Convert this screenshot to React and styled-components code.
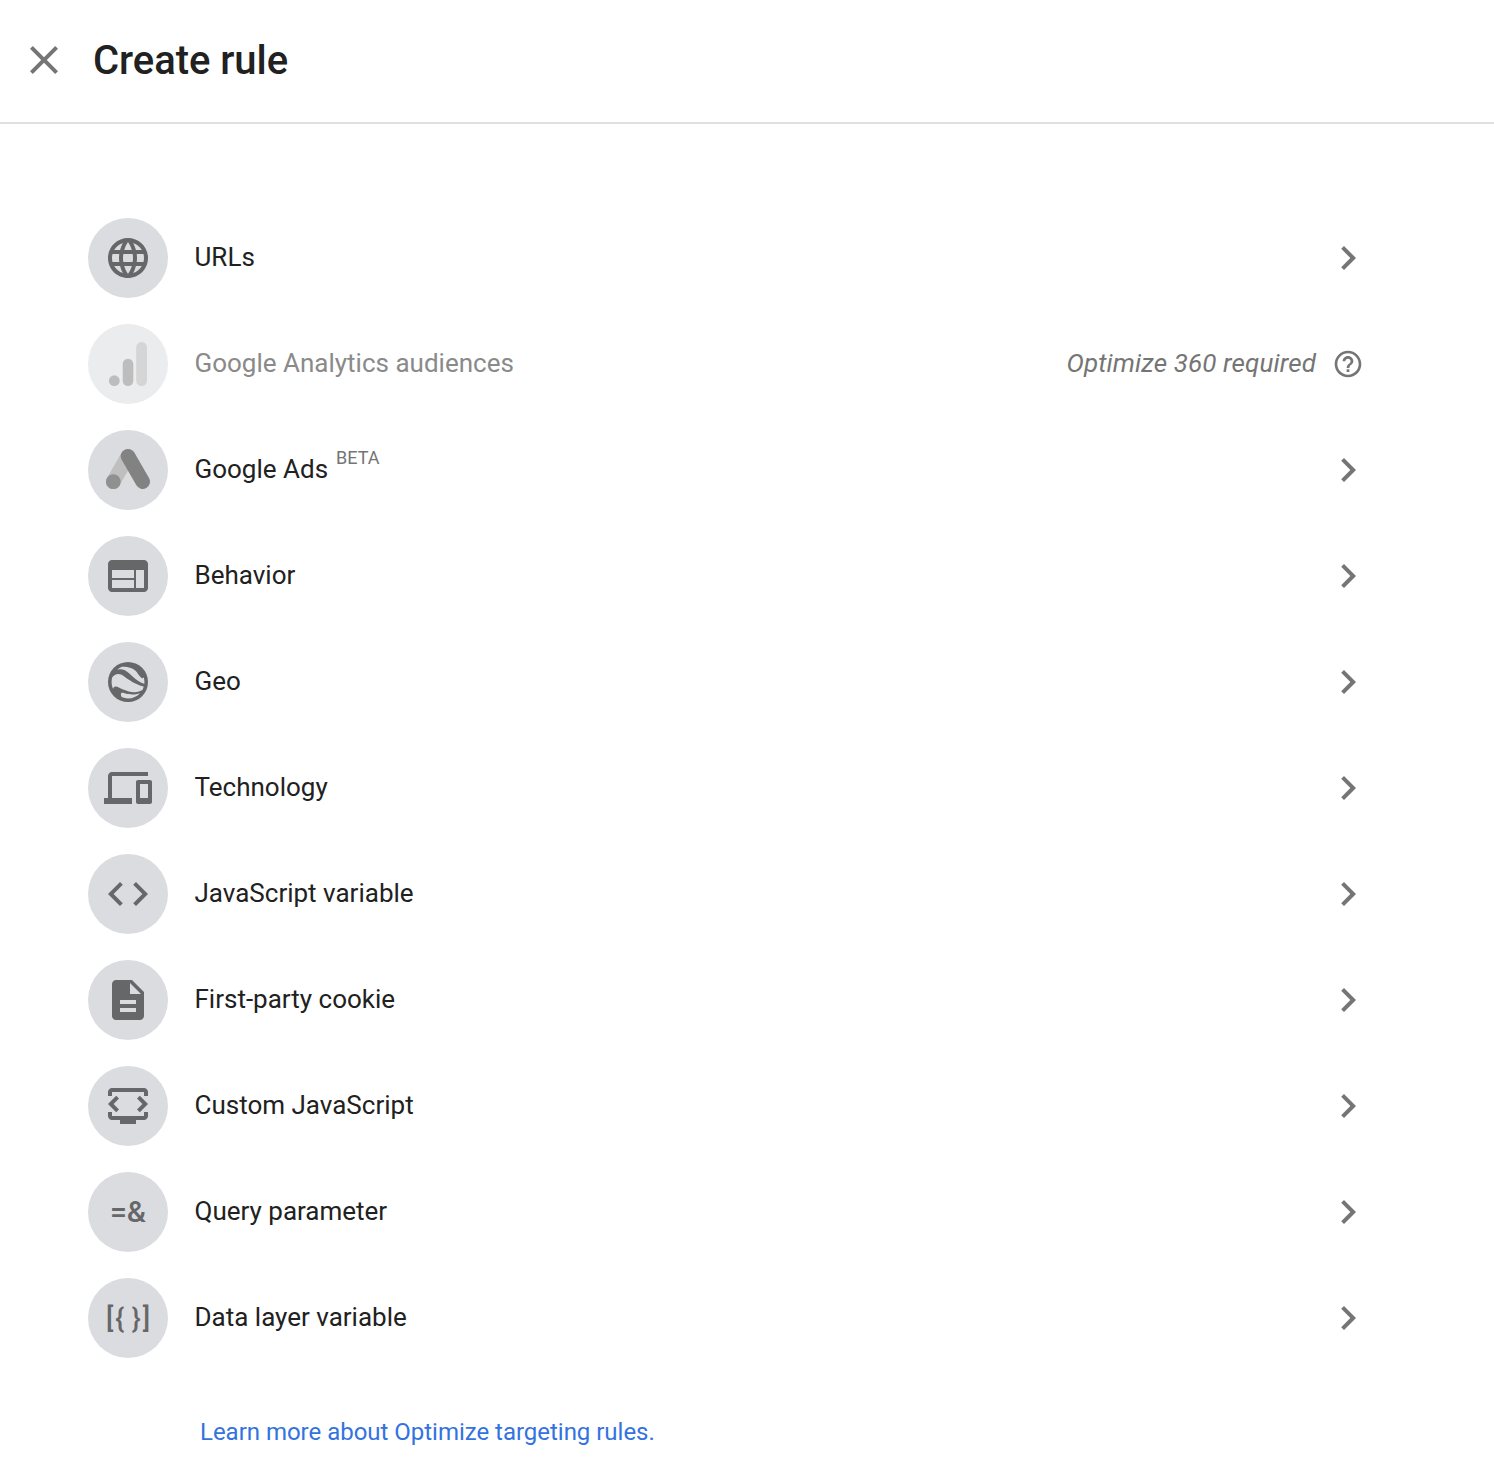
import React from "react";
import styled, { createGlobalStyle } from "styled-components";

const GlobalStyle = createGlobalStyle`
  * { box-sizing: border-box; }
  body {
    margin: 0;
    background: #fff;
    color: #212121;
    font-family: Roboto, "Liberation Sans", sans-serif;
  }
`;

const Page = styled.main`
  min-height: 1482px;
`;

const Header = styled.header`
  display: flex;
  align-items: center;
  height: 124px;
  padding: 0 20px 2px;
  border-bottom: 2px solid #e0e0e0;
`;

const IconButton = styled.button`
  display: flex;
  padding: 0;
  border: 0;
  background: none;
  color: #757575;
`;

const Title = styled.h1`
  margin: 0 0 0 25px;
  padding-top: 2px;
  font-size: 40px;
  font-weight: 500;
  line-height: 48px;
  letter-spacing: -0.05px;
`;

const RuleList = styled.ul`
  display: flex;
  flex-direction: column;
  gap: 26px;
  margin: 0;
  padding: 94px 122px 0 88px;
  list-style: none;
`;

const RuleRow = styled.li`
  display: flex;
  align-items: center;
  height: 80px;
  color: ${(p) => (p.$disabled ? "#8a8a8a" : "#212121")};
`;

const Badge = styled.span`
  display: flex;
  flex: none;
  align-items: center;
  justify-content: center;
  width: 80px;
  height: 80px;
  border-radius: 50%;
  background: ${(p) => (p.$disabled ? "#ebeced" : "#dbdce0")};
  color: #666769;
`;

const Glyph = styled.span`
  padding-top: ${(p) => p.$drop || 0}px;
  font-size: ${(p) => p.$size}px;
  font-weight: 500;
  line-height: 32px;
  letter-spacing: ${(p) => p.$spacing || 0}px;
  word-spacing: ${(p) => p.$wordSpacing || 0}px;
  margin-right: -${(p) => p.$spacing || 0}px;
  white-space: pre;
`;

const Label = styled.span`
  margin-left: 26.5px;
  padding-bottom: 2px;
  font-size: 26px;
  line-height: 32px;
`;

const Beta = styled.span`
  margin: 0 0 24px 8px;
  color: #757575;
  font-size: 18px;
  line-height: 20px;
`;

const Trailing = styled.span`
  display: flex;
  align-items: center;
  margin-left: auto;
  color: #757575;
`;

const Requirement = styled.em`
  margin-right: 16px;
  padding-bottom: 2px;
  font-size: 26px;
  line-height: 32px;
  letter-spacing: 0.12px;
`;

const HelpSlot = styled.span`
  display: flex;
  margin-right: 8px;
`;

const LearnMore = styled.a`
  display: inline-block;
  margin: 58px 0 0 200px;
  color: #3372df;
  font-size: 24px;
  line-height: 32px;
  letter-spacing: -0.02px;
  text-decoration: none;
`;

const Svg = styled.svg.attrs(() => ({ viewBox: "0 0 24 24", "aria-hidden": true }))`
  display: block;
  width: ${(p) => p.$size || 48}px;
  height: ${(p) => p.$size || 48}px;
  fill: currentColor;
`;

const Icon = ({ d, size }) => (
  <Svg $size={size}>
    <path d={d} />
  </Svg>
);

const paths = {
  close: "M19 6.41L17.59 5 12 10.59 6.41 5 5 6.41 10.59 12 5 17.59 6.41 19 12 13.41 17.59 19 19 17.59 13.41 12z",
  chevron: "M10 6L8.59 7.41 13.17 12l-4.58 4.59L10 18l6-6z",
  help: "M11 18h2v-2h-2v2zm1-16C6.48 2 2 6.48 2 12s4.48 10 10 10 10-4.48 10-10S17.52 2 12 2zm0 18c-4.41 0-8-3.59-8-8s3.59-8 8-8 8 3.59 8 8-3.59 8-8 8zm0-14c-2.21 0-4 1.79-4 4h2c0-1.1.9-2 2-2s2 .9 2 2c0 2-3 1.75-3 5h2c0-2.25 3-2.5 3-5 0-2.21-1.79-4-4-4z",
  globe: "M11.99 2C6.47 2 2 6.48 2 12s4.47 10 9.99 10C17.52 22 22 17.52 22 12S17.52 2 11.99 2zm6.93 6h-2.95c-.32-1.25-.78-2.45-1.38-3.56 1.84.63 3.37 1.91 4.33 3.56zM12 4.04c.83 1.2 1.48 2.53 1.91 3.96h-3.82c.43-1.43 1.08-2.76 1.91-3.96zM4.26 14C4.1 13.36 4 12.69 4 12s.1-1.36.26-2h3.38c-.08.66-.14 1.32-.14 2 0 .68.06 1.34.14 2H4.26zm.82 2h2.95c.32 1.25.78 2.45 1.38 3.56-1.84-.63-3.37-1.9-4.33-3.56zm2.95-8H5.08c.96-1.66 2.49-2.93 4.33-3.56C8.81 5.55 8.35 6.75 8.03 8zM12 19.96c-.83-1.2-1.48-2.53-1.91-3.96h3.82c-.43 1.43-1.08 2.76-1.91 3.96zM14.34 14H9.66c-.09-.66-.16-1.32-.16-2 0-.68.07-1.35.16-2h4.68c.09.65.16 1.32.16 2 0 .68-.07 1.34-.16 2zm.25 5.56c.6-1.11 1.06-2.31 1.38-3.56h2.95c-.96 1.65-2.49 2.93-4.33 3.56zM16.36 14c.08-.66.14-1.32.14-2 0-.68-.06-1.34-.14-2h3.38c.16.64.26 1.31.26 2s-.1 1.36-.26 2h-3.38z",
  web: "M20 4H4c-1.1 0-1.99.9-1.99 2L2 18c0 1.1.9 2 2 2h16c1.1 0 2-.9 2-2V6c0-1.1-.9-2-2-2zm-5 14H4v-4h11v4zm0-5H4V9h11v4zm5 5h-4V9h4v9z",
  earth: "M12.4,7.56C9.6,4.91 7.3,5.65 6.31,6.1C7.06,5.38 7.94,4.8 8.92,4.4C11.7,4.3 14.83,4.84 16.56,7.31C16.56,7.31 19,11.5 19.86,9.65C20.08,10.4 20.2,11.18 20.2,12C20.2,12.3 20.18,12.59 20.15,12.88C18.12,12.65 15.33,10.32 12.4,7.56M19.1,16.1C18.16,16.47 17,17.1 15.14,17.1C13.26,17.1 11.61,16.35 9.56,15.7C7.7,15.11 7,14.2 5.72,14.2C5.06,14.2 4.73,14.86 4.55,15.41C4.07,14.37 3.8,13.22 3.8,12C3.8,11.19 3.92,10.42 4.14,9.68C5.4,8.1 7.33,7.12 10.09,9.26C10.09,9.26 16.32,13.92 19.88,14.23C19.7,14.89 19.43,15.5 19.1,16.1M12,20.2C10.88,20.2 9.81,19.97 8.83,19.56C8.21,18.08 8.22,16.92 9.95,17.5C9.95,17.5 13.87,19 18,17.58C16.5,19.19 14.37,20.2 12,20.2M12,2A10,10 0 0,0 2,12A10,10 0 0,0 12,22A10,10 0 0,0 22,12A10,10 0 0,0 12,2Z",
  devices: "M4 6h18V4H4c-1.1 0-2 .9-2 2v11H0v3h14v-3H4V6zm19 2h-6c-.55 0-1 .45-1 1v10c0 .55.45 1 1 1h6c.55 0 1-.45 1-1V9c0-.55-.45-1-1-1zm-1 9h-4v-7h4v7z",
  code: "M9.4 16.6L4.8 12l4.6-4.6L8 6l-6 6 6 6 1.4-1.4zm5.2 0l4.6-4.6-4.6-4.6L16 6l6 6-6 6-1.4-1.4z",
  document: "M14 2H6c-1.1 0-1.99.9-1.99 2L4 20c0 1.1.89 2 1.99 2H18c1.1 0 2-.9 2-2V8l-6-6zm2 16H8v-2h8v2zm0-4H8v-2h8v2zm-3-5V3.5L18.5 9H13z",
  monitor: "M2 7V5c0-1.1.9-2 2-2h16c1.1 0 2 .9 2 2v2h-2V5H4v2zM2 15h2v2h16v-2h2v2c0 1.1-.9 2-2 2h-4v2H8v-2H4c-1.1 0-2-.9-2-2zM2 11l4.1-4.1 1.4 1.4L4.8 11l2.7 2.7-1.4 1.4zM22 11l-4.1-4.1-1.4 1.4 2.7 2.7-2.7 2.7 1.4 1.4z",
};

const AnalyticsIcon = () => (
  <Svg>
    <circle cx="5.15" cy="20.35" r="2.7" fill="#bdbdbd" />
    <rect x="9.35" y="9.35" width="5.3" height="13.7" rx="2.65" fill="#bdbdbd" />
    <rect x="16.1" y="1" width="5.4" height="22.05" rx="2.7" fill="#d5d5d5" />
  </Svg>
);

const AdsIcon = () => (
  <Svg strokeWidth="7.3" strokeLinecap="round">
    <path d="M4.65 17.8L12 5.1" stroke="#bfbfc0" />
    <path d="M12 5.1L19.35 17.8" stroke="#828282" />
    <circle cx="4.65" cy="17.85" r="3.7" fill="#909090" />
  </Svg>
);

const rules = [
  { label: "URLs", icon: <Icon d={paths.globe} /> },
  { label: "Google Analytics audiences", icon: <AnalyticsIcon />, requires: "Optimize 360 required" },
  { label: "Google Ads", icon: <AdsIcon />, beta: true },
  { label: "Behavior", icon: <Icon d={paths.web} /> },
  { label: "Geo", icon: <Icon d={paths.earth} /> },
  { label: "Technology", icon: <Icon d={paths.devices} /> },
  { label: "JavaScript variable", icon: <Icon d={paths.code} /> },
  { label: "First-party cookie", icon: <Icon d={paths.document} /> },
  { label: "Custom JavaScript", icon: <Icon d={paths.monitor} /> },
  { label: "Query parameter", icon: <Glyph $size={30}>=&amp;</Glyph> },
  {
    label: "Data layer variable",
    icon: <Glyph $size={27} $spacing={2} $wordSpacing={-3.2} $drop={2}>{"[{ }]"}</Glyph>,
  },
];

const Rule = ({ label, icon, beta, requires }) => (
  <RuleRow $disabled={!!requires}>
    <Badge $disabled={!!requires}>{icon}</Badge>
    <Label>{label}</Label>
    {beta && <Beta>BETA</Beta>}
    <Trailing>
      {requires ? (
        <>
          <Requirement>{requires}</Requirement>
          <HelpSlot>
            <Icon d={paths.help} size={32} />
          </HelpSlot>
        </>
      ) : (
        <Icon d={paths.chevron} />
      )}
    </Trailing>
  </RuleRow>
);

export default function App() {
  return (
    <Page>
      <GlobalStyle />
      <Header>
        <IconButton aria-label="Close">
          <Icon d={paths.close} />
        </IconButton>
        <Title>Create rule</Title>
      </Header>
      <RuleList>
        {rules.map((rule) => (
          <Rule key={rule.label} {...rule} />
        ))}
      </RuleList>
      <LearnMore>Learn more about Optimize targeting rules.</LearnMore>
    </Page>
  );
}
